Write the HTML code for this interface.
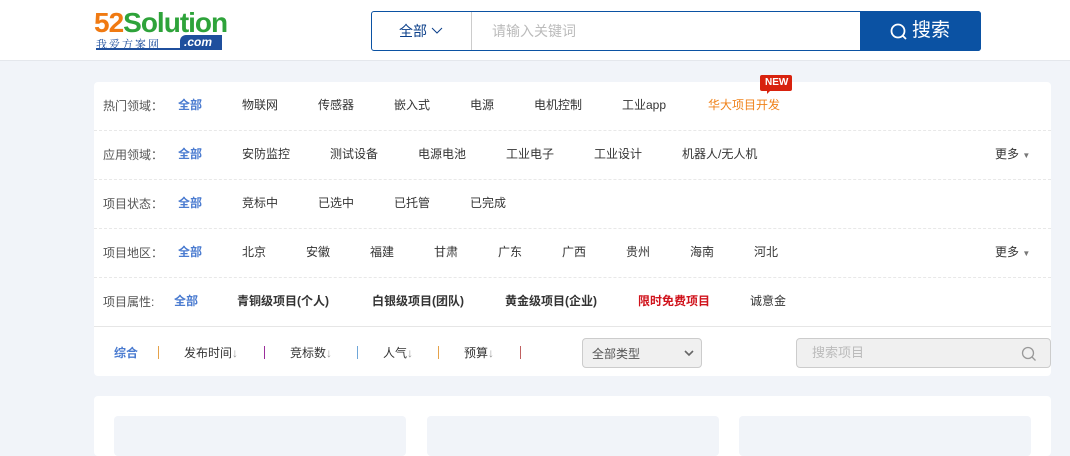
<!DOCTYPE html>
<html><head><meta charset="utf-8"><style>
*{margin:0;padding:0;box-sizing:border-box}
body{width:1070px;height:440px;overflow:hidden;background:#f1f4f9;font-family:"Liberation Sans","Noto Sans CJK SC",sans-serif;position:relative;font-size:12px;color:#333}
.a{position:absolute;white-space:nowrap;line-height:16px}
.hdr{position:absolute;left:0;top:0;width:1070px;height:61px;background:#fff;border-bottom:1px solid #e4e7ec}
.panel{position:absolute;left:94px;top:82px;width:957px;height:294px;background:#fff;border-radius:4px}
.sep{position:absolute;left:94px;width:957px;border-top:1px dashed #e8e8e8}
.lbl{color:#555}
.b{color:#4a7bd0;font-weight:bold}
.bar{position:absolute;width:2px;height:13px;top:346px}
</style></head><body>
<div class="hdr">
 <div class="a" style="left:94px;top:10px;line-height:26px;font-size:28px;font-weight:bold;letter-spacing:-1px"><span style="color:#f07a12">52</span><span style="color:#2ea33a">Solution</span></div>
 <div class="a" style="left:96px;top:36px;font-size:11px;color:#1f4f9d;font-family:'Noto Serif CJK SC',serif;letter-spacing:2px">我爱方案网</div>
 <div style="position:absolute;left:180px;top:35px;width:42px;height:14px;background:#1f4f9d;border-radius:6px 0 0 0"></div>
 <div class="a" style="left:184px;top:34px;color:#fff;font-size:12px;font-style:italic;font-weight:bold">.com</div>
 <div style="position:absolute;left:96px;top:48px;width:126px;height:2px;background:#1f4f9d"></div>
 <div style="position:absolute;left:371px;top:11px;width:610px;height:40px;border:1px solid #0b52a3;border-radius:3px;background:#fff"></div>
 <div style="position:absolute;left:471px;top:12px;width:1px;height:38px;background:#ccc"></div>
 <div class="a" style="left:399px;top:23px;font-size:14px;color:#0b3f8a">全部</div>
 <svg style="position:absolute;left:430px;top:26px" width="14" height="10"><path d="M2 2 L7 7 L12 2" fill="none" stroke="#0b3f8a" stroke-width="1"/></svg>
 <div class="a" style="left:492px;top:23px;font-size:14px;color:#bbb">请输入关键词</div>
 <div style="position:absolute;left:860px;top:11px;width:121px;height:40px;background:#0b52a3;border-radius:0 3px 3px 0"></div>
 <svg style="position:absolute;left:889px;top:22px" width="20" height="20"><circle cx="9" cy="9" r="6.5" fill="none" stroke="#fff" stroke-width="1.8"/><path d="M13.5 13.5 L17 17" stroke="#fff" stroke-width="1.8"/></svg>
 <div class="a" style="left:912px;top:20px;font-size:19px;line-height:22px;color:#fff">搜索</div>
</div>

<div class="panel"></div>
<div class="sep" style="top:130px"></div>
<div class="sep" style="top:179px"></div>
<div class="sep" style="top:228px"></div>
<div class="sep" style="top:277px"></div>
<div class="sep" style="top:326px;border-top:1px solid #e6e6e6"></div>

<!-- row1 -->
<div class="a lbl" style="left:103px;top:98px">热门领域：</div>
<div class="a b" style="left:178px;top:97px">全部</div>
<div class="a" style="left:242px;top:97px">物联网</div>
<div class="a" style="left:318px;top:97px">传感器</div>
<div class="a" style="left:394px;top:97px">嵌入式</div>
<div class="a" style="left:470px;top:97px">电源</div>
<div class="a" style="left:534px;top:97px">电机控制</div>
<div class="a" style="left:622px;top:97px">工业app</div>
<div class="a" style="left:708px;top:97px;color:#f0821a">华大项目开发</div>
<div style="position:absolute;left:760px;top:75px;width:32px;height:16px;background:#d8220e;border-radius:2px"></div>
<div style="position:absolute;left:767px;top:90px;width:0;height:0;border-left:4px solid #d8220e;border-bottom:4px solid transparent"></div>
<div class="a" style="left:765px;top:75px;font-size:10px;font-weight:bold;color:#fff">NEW</div>

<!-- row2 -->
<div class="a lbl" style="left:103px;top:147px">应用领域：</div>
<div class="a b" style="left:178px;top:146px">全部</div>
<div class="a" style="left:242px;top:146px">安防监控</div>
<div class="a" style="left:330px;top:146px">测试设备</div>
<div class="a" style="left:418px;top:146px">电源电池</div>
<div class="a" style="left:506px;top:146px">工业电子</div>
<div class="a" style="left:594px;top:146px">工业设计</div>
<div class="a" style="left:682px;top:146px">机器人/无人机</div>
<div class="a" style="left:995px;top:146px">更多 <span style="font-size:8px;color:#777">▼</span></div>

<!-- row3 -->
<div class="a lbl" style="left:103px;top:196px">项目状态：</div>
<div class="a b" style="left:178px;top:195px">全部</div>
<div class="a" style="left:242px;top:195px">竞标中</div>
<div class="a" style="left:318px;top:195px">已选中</div>
<div class="a" style="left:394px;top:195px">已托管</div>
<div class="a" style="left:470px;top:195px">已完成</div>

<!-- row4 -->
<div class="a lbl" style="left:103px;top:245px">项目地区：</div>
<div class="a b" style="left:178px;top:244px">全部</div>
<div class="a" style="left:242px;top:244px">北京</div>
<div class="a" style="left:306px;top:244px">安徽</div>
<div class="a" style="left:370px;top:244px">福建</div>
<div class="a" style="left:434px;top:244px">甘肃</div>
<div class="a" style="left:498px;top:244px">广东</div>
<div class="a" style="left:562px;top:244px">广西</div>
<div class="a" style="left:626px;top:244px">贵州</div>
<div class="a" style="left:690px;top:244px">海南</div>
<div class="a" style="left:754px;top:244px">河北</div>
<div class="a" style="left:995px;top:244px">更多 <span style="font-size:8px;color:#777">▼</span></div>

<!-- row5 -->
<div class="a lbl" style="left:103px;top:294px">项目属性:</div>
<div class="a b" style="left:174px;top:293px">全部</div>
<div class="a" style="left:237px;top:293px;font-weight:bold">青铜级项目(个人)</div>
<div class="a" style="left:372px;top:293px;font-weight:bold">白银级项目(团队)</div>
<div class="a" style="left:505px;top:293px;font-weight:bold">黄金级项目(企业)</div>
<div class="a" style="left:638px;top:293px;font-weight:bold;color:#d0121b">限时免费项目</div>
<div class="a" style="left:750px;top:293px">诚意金</div>

<!-- sort bar -->
<div class="a" style="left:114px;top:345px;color:#4a7bd0;font-weight:bold">综合</div>
<div class="bar" style="left:158px;background:#e5a24a;width:1px"></div>
<div class="a" style="left:184px;top:345px">发布时间<span style="color:#999">↓</span></div>
<div class="bar" style="left:264px;background:#9b2d9b;width:1px"></div>
<div class="a" style="left:290px;top:345px">竞标数<span style="color:#999">↓</span></div>
<div class="bar" style="left:357px;background:#6fa6d8;width:1px"></div>
<div class="a" style="left:383px;top:345px">人气<span style="color:#999">↓</span></div>
<div class="bar" style="left:438px;background:#e5a24a;width:1px"></div>
<div class="a" style="left:464px;top:345px">预算<span style="color:#999">↓</span></div>
<div class="bar" style="left:520px;background:#c06060;width:1px"></div>
<div style="position:absolute;left:582px;top:338px;width:120px;height:30px;background:#f0f0f0;border:1px solid #ccc;border-radius:4px"></div>
<div class="a" style="left:592px;top:346px;color:#555">全部类型</div>
<svg style="position:absolute;left:684px;top:349px" width="10" height="8"><path d="M1 2 L5 6 L9 2" fill="none" stroke="#666" stroke-width="1.6"/></svg>
<div style="position:absolute;left:796px;top:338px;width:255px;height:30px;background:#f0f0f0;border:1px solid #ccc;border-radius:4px"></div>
<div class="a" style="left:812px;top:345px;color:#bbb;font-size:13px">搜索项目</div>
<svg style="position:absolute;left:1020px;top:345px" width="18" height="18"><circle cx="8" cy="8" r="5.5" fill="none" stroke="#999" stroke-width="1.3"/><path d="M12 12 L15.5 15.5" stroke="#999" stroke-width="1.3"/></svg>

<!-- lower -->
<div style="position:absolute;left:94px;top:396px;width:957px;height:60px;background:#fff;border-radius:4px"></div>
<div style="position:absolute;left:114px;top:416px;width:292px;height:40px;background:#f1f4f9;border-radius:4px"></div>
<div style="position:absolute;left:427px;top:416px;width:292px;height:40px;background:#f1f4f9;border-radius:4px"></div>
<div style="position:absolute;left:739px;top:416px;width:292px;height:40px;background:#f1f4f9;border-radius:4px"></div>
</body></html>
